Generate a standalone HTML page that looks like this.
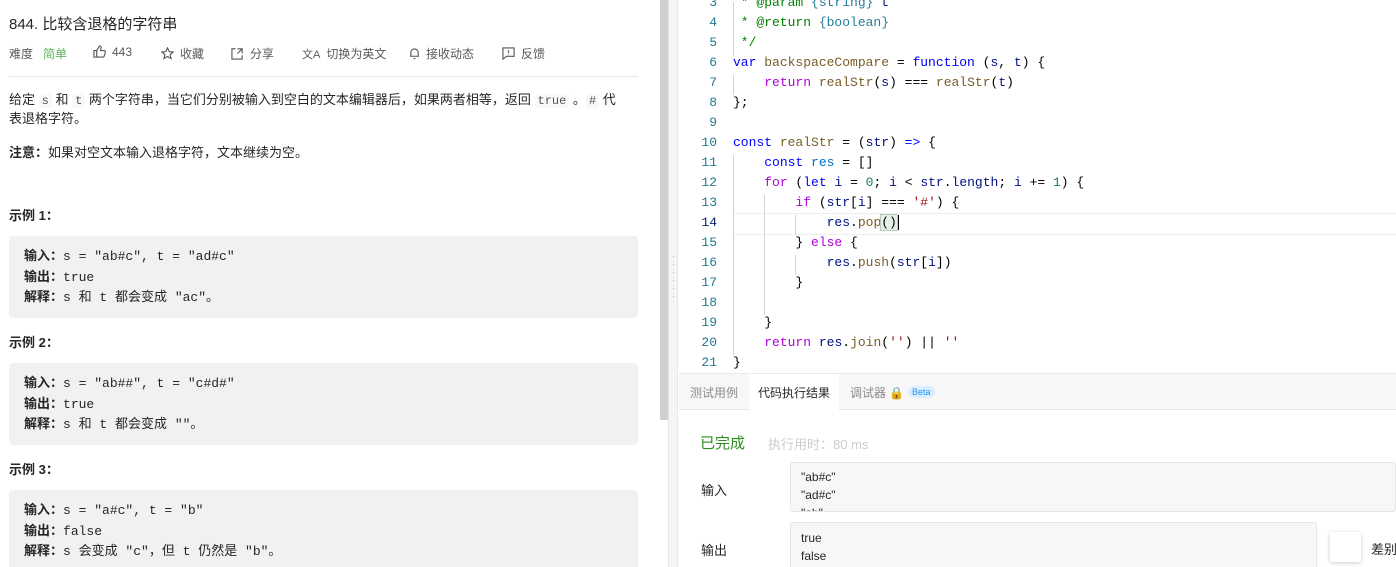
<!DOCTYPE html>
<html><head><meta charset="utf-8"><style>
*{margin:0;padding:0;box-sizing:border-box}
html,body{width:1396px;height:567px;overflow:hidden}
body{background:#fff;font-family:"Liberation Sans","Noto Sans CJK SC",sans-serif;color:#262626;position:relative}
.a{position:absolute;white-space:nowrap}
.ic{display:inline-block;vertical-align:-2px;margin-right:6px}
.code{background:#f7f8fa;padding:0 3px;border-radius:3px;font-family:"Liberation Mono",monospace;font-size:12px;color:#555}
.ex{position:absolute;left:9px;width:629px;background:#f0f1f3;border-radius:4px}
.ex div{position:absolute;left:15px;font-size:13px;font-family:"Liberation Mono","Noto Sans CJK SC",monospace;color:#262626}
.ex b{font-family:"Liberation Sans","Noto Sans CJK SC",sans-serif}
.ln{position:absolute;left:680px;width:37px;text-align:right;font-family:"Liberation Mono",monospace;font-size:13px;color:#237893}
.cl{position:absolute;left:733px;font-family:"Liberation Mono",monospace;font-size:13px;white-space:pre;color:#000}
.k{color:#0000ff}.p{color:#af00db}.f{color:#795e26}.v{color:#001080}.c{color:#008000}.n{color:#098658}.s{color:#a31515}.t{color:#267f99}
.g{position:absolute;width:1px;background:#d3d3d3}
#ed{position:absolute;left:0;top:2px;width:1396px;height:370px}
</style></head><body>
<!-- left -->
<div class="a" style="left:9px;top:13px;font-size:15px;color:#262626">844. 比较含退格的字符串</div>
<div class="a" style="left:9px;top:45px;font-size:12px;color:#595959">难度 &nbsp; <span style="color:#5cb85c">简单</span></div>
<div class="a" style="left:93px;top:45px;font-size:12px;color:#595959"><svg class="ic" width="13" height="13" viewBox="0 0 14 14" fill="none" stroke="#555" stroke-width="1.2"><path d="M1 6h3v7H1zM4 6l3-5c1.5 0 2 1 1.6 2.5L8 6h4.2c.8 0 1.3.7 1.1 1.5l-1.2 4.5c-.2.6-.7 1-1.3 1H4"/></svg>443</div>
<div class="a" style="left:161px;top:45px;font-size:12px;color:#595959"><svg class="ic" width="13" height="13" viewBox="0 0 14 14" fill="none" stroke="#555" stroke-width="1.2"><path d="M7 1l1.8 4 4.2.4-3.2 2.8 1 4.2L7 10.2 3.2 12.4l1-4.2L1 5.4l4.2-.4z"/></svg>收藏</div>
<div class="a" style="left:231px;top:45px;font-size:12px;color:#595959"><svg class="ic" width="13" height="13" viewBox="0 0 14 14" fill="none" stroke="#555" stroke-width="1.2"><path d="M5 2H1v11h11V9M7 2h5v5M12 2L7 7"/></svg>分享</div>
<div class="a" style="left:302px;top:45px;font-size:12px;color:#595959"><span style="font-size:11px;margin-right:6px">文A</span>切换为英文</div>
<div class="a" style="left:409px;top:45px;font-size:12px;color:#595959"><svg class="ic" width="11" height="13" viewBox="0 0 12 14" fill="none" stroke="#555" stroke-width="1.2"><path d="M2 10V6a4 4 0 018 0v4H2zM1 10h10M5 12.5h2"/></svg>接收动态</div>
<div class="a" style="left:502px;top:45px;font-size:12px;color:#595959"><svg class="ic" width="13" height="13" viewBox="0 0 14 14" fill="none" stroke="#555" stroke-width="1.2"><path d="M1 1h12v9H5l-4 3zM7 3.5v3M7 8v.5"/></svg>反馈</div>
<div class="a" style="left:9px;top:76px;width:629px;height:1px;background:#e8e8e8"></div>
<div class="a" style="left:9px;top:90px;font-size:13px;line-height:20px">给定 <span class="code">s</span> 和 <span class="code">t</span> 两个字符串，当它们分别被输入到空白的文本编辑器后，如果两者相等，返回 <span class="code">true</span> 。<span class="code">#</span> 代</div>
<div class="a" style="left:9px;top:109px;font-size:13px;line-height:20px">表退格字符。</div>
<div class="a" style="left:9px;top:142px;font-size:13px"><b>注意：</b>如果对空文本输入退格字符，文本继续为空。</div>
<div class="a" style="left:9px;top:205px;font-size:13px"><b>示例 1：</b></div>
<div class="ex" style="top:236px;height:82px"><div style="top:9px"><b>输入：</b>s = "ab#c", t = "ad#c"</div><div style="top:30px"><b>输出：</b>true</div><div style="top:50px"><b>解释：</b>s 和 t 都会变成 "ac"。</div></div>
<div class="a" style="left:9px;top:332px;font-size:13px"><b>示例 2：</b></div>
<div class="ex" style="top:363px;height:82px"><div style="top:9px"><b>输入：</b>s = "ab##", t = "c#d#"</div><div style="top:30px"><b>输出：</b>true</div><div style="top:50px"><b>解释：</b>s 和 t 都会变成 ""。</div></div>
<div class="a" style="left:9px;top:459px;font-size:13px"><b>示例 3：</b></div>
<div class="ex" style="top:490px;height:80px"><div style="top:9px"><b>输入：</b>s = "a#c", t = "b"</div><div style="top:30px"><b>输出：</b>false</div><div style="top:50px"><b>解释：</b>s 会变成 "c"，但 t 仍然是 "b"。</div></div>
<div class="a" style="left:660px;top:0;width:8px;height:420px;background:#cfcfcf"></div>
<div class="a" style="left:668px;top:0;width:10px;height:567px;background:#f5f5f5;border-left:1px solid #e8e8e8;border-right:1px solid #e8e8e8"></div>
<div class="a" style="left:672px;top:252px;font-size:9px;color:#aaa;line-height:8px;white-space:normal;width:3px">·<br>·<br>·<br>·<br>·<br>·</div>
<!-- editor -->
<div id="ed">
<div class="a" style="left:733px;top:211px;width:663px;height:22px;border-top:1px solid #eee;border-bottom:1px solid #eee"></div>
<div class="g" style="left:733px;top:0;height:54px"></div>
<div class="g" style="left:733px;top:73px;height:20px"></div>
<div class="g" style="left:733px;top:153px;height:200px"></div>
<div class="g" style="left:764px;top:193px;height:120px"></div>
<div class="g" style="left:795px;top:213px;height:20px"></div>
<div class="g" style="left:795px;top:253px;height:20px"></div>
<div class="ln" style="top:-7px">3</div><div class="cl" style="top:-7px"><span class="c"> * @param </span><span class="t">{string}</span><span class="v"> t</span></div>
<div class="ln" style="top:13px">4</div><div class="cl c" style="top:13px"> * @return <span class="t">{boolean}</span></div>
<div class="ln" style="top:33px">5</div><div class="cl c" style="top:33px"> */</div>
<div class="ln" style="top:53px">6</div><div class="cl" style="top:53px"><span class="k">var</span> <span class="f">backspaceCompare</span> = <span class="k">function</span> (<span class="v">s</span>, <span class="v">t</span>) {</div>
<div class="ln" style="top:73px">7</div><div class="cl" style="top:73px">    <span class="p">return</span> <span class="f">realStr</span>(<span class="v">s</span>) === <span class="f">realStr</span>(<span class="v">t</span>)</div>
<div class="ln" style="top:93px">8</div><div class="cl" style="top:93px">};</div>
<div class="ln" style="top:113px">9</div>
<div class="ln" style="top:133px">10</div><div class="cl" style="top:133px"><span class="k">const</span> <span class="f">realStr</span> = (<span class="v">str</span>) <span class="k">=&gt;</span> {</div>
<div class="ln" style="top:153px">11</div><div class="cl" style="top:153px">    <span class="k">const</span> <span style="color:#0070c1">res</span> = []</div>
<div class="ln" style="top:173px">12</div><div class="cl" style="top:173px">    <span class="p">for</span> (<span class="k">let</span> <span class="v">i</span> = <span class="n">0</span>; <span class="v">i</span> &lt; <span class="v">str</span>.<span class="v">length</span>; <span class="v">i</span> += <span class="n">1</span>) {</div>
<div class="ln" style="top:193px">13</div><div class="cl" style="top:193px">        <span class="p">if</span> (<span class="v">str</span>[<span class="v">i</span>] === <span class="s">'#'</span>) {</div>
<div class="ln" style="top:213px;color:#0b216f">14</div><div class="cl" style="top:213px">            <span class="v">res</span>.<span class="f">pop</span><span style="background:#e6efe6;outline:1px solid #b9c9b9">()</span><span style="border-left:2px solid #000"></span></div>
<div class="ln" style="top:233px">15</div><div class="cl" style="top:233px">        } <span class="p">else</span> {</div>
<div class="ln" style="top:253px">16</div><div class="cl" style="top:253px">            <span class="v">res</span>.<span class="f">push</span>(<span class="v">str</span>[<span class="v">i</span>])</div>
<div class="ln" style="top:273px">17</div><div class="cl" style="top:273px">        }</div>
<div class="ln" style="top:293px">18</div>
<div class="ln" style="top:313px">19</div><div class="cl" style="top:313px">    }</div>
<div class="ln" style="top:333px">20</div><div class="cl" style="top:333px">    <span class="p">return</span> <span class="v">res</span>.<span class="f">join</span>(<span class="s">''</span>) || <span class="s">''</span></div>
<div class="ln" style="top:353px">21</div><div class="cl" style="top:353px">}</div>
</div>
<!-- bottom -->
<div class="a" style="left:679px;top:373px;width:717px;height:37px;background:#f7f7f7;border-top:1px solid #eaeaea;border-bottom:1px solid #e8e8e8"></div>
<div class="a" style="left:749px;top:374px;width:90px;height:36px;background:#fff"></div>
<div class="a" style="left:690px;top:384px;font-size:12px;color:#8c8c8c">测试用例</div>
<div class="a" style="left:758px;top:384px;font-size:12px;color:#262626">代码执行结果</div>
<div class="a" style="left:850px;top:384px;font-size:12px;color:#8c8c8c">调试器 <span style="color:#f5a623">🔒</span></div>
<div class="a" style="left:908px;top:386px;font-size:9px;color:#2196f3;background:#dbeeff;border-radius:7px;padding:1px 4px">Beta</div>
<div class="a" style="left:700px;top:432px;font-size:15px;color:#2e8b1e">已完成</div>
<div class="a" style="left:768px;top:434px;font-size:13px;color:#ccc">执行用时：80 ms</div>
<div class="a" style="left:701px;top:480px;font-size:13px">输入</div>
<div class="a" style="left:790px;top:462px;width:606px;height:50px;background:#f7f7f7;border:1px solid #e6e6e6;border-radius:3px;overflow:hidden;font-size:12px;line-height:18px;padding:5px 10px;white-space:pre">"ab#c"
"ad#c"
"ab"</div>
<div class="a" style="left:701px;top:540px;font-size:13px">输出</div>
<div class="a" style="left:790px;top:522px;width:527px;height:50px;background:#f7f7f7;border:1px solid #e6e6e6;border-radius:3px;font-size:12px;line-height:18px;padding:6px 10px;white-space:pre">true
false</div>
<div class="a" style="left:1330px;top:532px;width:31px;height:30px;background:#fff;box-shadow:0 1px 4px rgba(0,0,0,.2);border-radius:2px"></div>
<div class="a" style="left:1371px;top:539px;font-size:13px">差别</div>
</body></html>
